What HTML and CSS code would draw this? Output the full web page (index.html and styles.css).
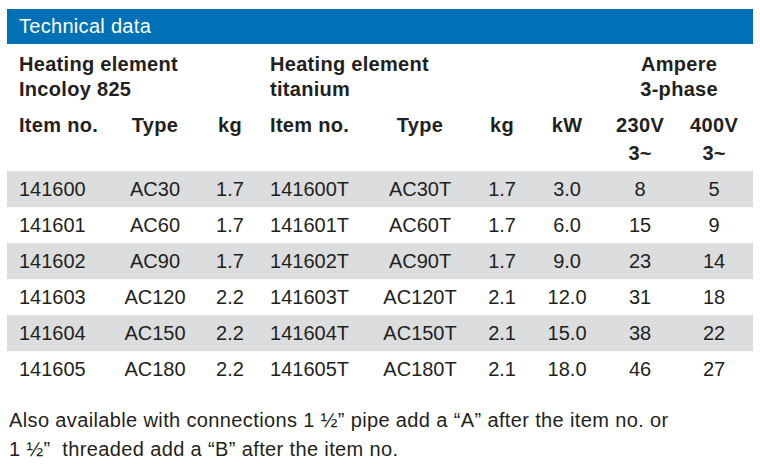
FILE: index.html
```html
<!DOCTYPE html>
<html lang="en">
<head>
<meta charset="utf-8">
<title>Technical data</title>
<link rel="stylesheet" href="styles.css">
</head>
<body>
<div class="sheet">
  <div class="title-bar">Technical data</div>
  <table class="data">
    <colgroup>
      <col class="c1"><col class="c2"><col class="c3"><col class="c4"><col class="c5"><col class="c6"><col class="c7"><col class="c8"><col class="c9">
    </colgroup>
    <thead>
      <tr class="group">
        <th colspan="3" class="left first">Heating element<br>Incoloy 825</th>
        <th colspan="4" class="left second">Heating element<br>titanium</th>
        <th colspan="2" class="center">Ampere<br>3-phase</th>
      </tr>
      <tr class="cols">
        <th class="left first">Item no.</th>
        <th>Type</th>
        <th>kg</th>
        <th class="left second">Item no.</th>
        <th>Type</th>
        <th>kg</th>
        <th>kW</th>
        <th>230V<br>3~</th>
        <th>400V<br>3~</th>
      </tr>
    </thead>
    <tbody>
      <tr class="shade"><td class="left first">141600</td><td>AC30</td><td>1.7</td><td class="left second">141600T</td><td>AC30T</td><td>1.7</td><td>3.0</td><td>8</td><td>5</td></tr>
      <tr><td class="left first">141601</td><td>AC60</td><td>1.7</td><td class="left second">141601T</td><td>AC60T</td><td>1.7</td><td>6.0</td><td>15</td><td>9</td></tr>
      <tr class="shade"><td class="left first">141602</td><td>AC90</td><td>1.7</td><td class="left second">141602T</td><td>AC90T</td><td>1.7</td><td>9.0</td><td>23</td><td>14</td></tr>
      <tr><td class="left first">141603</td><td>AC120</td><td>2.2</td><td class="left second">141603T</td><td>AC120T</td><td>2.1</td><td>12.0</td><td>31</td><td>18</td></tr>
      <tr class="shade"><td class="left first">141604</td><td>AC150</td><td>2.2</td><td class="left second">141604T</td><td>AC150T</td><td>2.1</td><td>15.0</td><td>38</td><td>22</td></tr>
      <tr><td class="left first">141605</td><td>AC180</td><td>2.2</td><td class="left second">141605T</td><td>AC180T</td><td>2.1</td><td>18.0</td><td>46</td><td>27</td></tr>
    </tbody>
  </table>
  <p class="note">Also available with connections 1 ½” pipe add a “A” after the item no. or<br>1 ½”&nbsp; threaded add a “B” after the item no.</p>
</div>
</body>
</html>
```

FILE: styles.css
```css
html, body {
  margin: 0;
  padding: 0;
  background: #ffffff;
}

body {
  font-family: "Liberation Sans", Arial, sans-serif;
  color: #231f20;
}

.sheet {
  padding: 9px 7px 0 7px;
  width: 746px;
}

.title-bar {
  background: #0071b6;
  color: #ffffff;
  font-size: 20px;
  letter-spacing: 0.3px;
  height: 35px;
  line-height: 35px;
  padding-left: 12px;
  box-sizing: border-box;
}

.data {
  width: 746px;
  border-collapse: collapse;
  table-layout: fixed;
  margin-top: 8px;
  font-size: 20px;
}

.c1 { width: 98px; }
.c2 { width: 100px; }
.c3 { width: 50px; }
.c4 { width: 110px; }
.c5 { width: 110px; }
.c6 { width: 54px; }
.c7 { width: 76px; }
.c8 { width: 70px; }
.c9 { width: 78px; }

.data th,
.data td {
  padding: 0;
  text-align: center;
  white-space: nowrap;
}

.data th {
  font-weight: bold;
  letter-spacing: 0.3px;
  vertical-align: top;
}

.group th {
  line-height: 25px;
  padding-bottom: 9px;
}

.cols th {
  line-height: 28px;
  padding-bottom: 4px;
}

.data td {
  height: 36px;
  line-height: 36px;
  vertical-align: middle;
}

.data .left { text-align: left; }
.data .center { text-align: center; }
.data .first { padding-left: 12px; }
.data .second { padding-left: 15px; }

.shade td { background: #dcddde; }

.note {
  margin: 19px 0 0 2px;
  font-size: 20px;
  letter-spacing: 0.37px;
  line-height: 29px;
}
```
